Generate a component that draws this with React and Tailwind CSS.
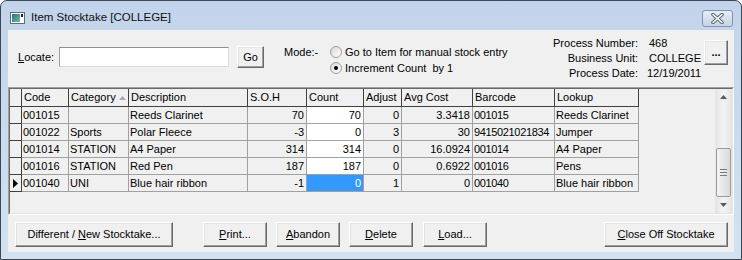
import React from "react";

const COLS = [
  { label: "Code", w: "w-[47px]" },
  { label: "Category", w: "w-[60px]", sort: true },
  { label: "Description", w: "w-[119px]" },
  { label: "S.O.H", w: "w-[59px]", right: true },
  { label: "Count", w: "w-[57px]", right: true, edit: true },
  { label: "Adjust", w: "w-[38px]", right: true },
  { label: "Avg Cost", w: "w-[71px]", right: true },
  { label: "Barcode", w: "w-[82px]", tight: true },
  { label: "Lookup", w: "w-[84px]" }
];

const ROWS = [
  ["001015", "", "Reeds Clarinet", "70", "70", "0", "3.3418", "001015", "Reeds Clarinet"],
  ["001022", "Sports", "Polar Fleece", "-3", "0", "3", "30", "9415021021834", "Jumper"],
  ["001014", "STATION", "A4 Paper", "314", "314", "0", "16.0924", "001014", "A4 Paper"],
  ["001016", "STATION", "Red Pen", "187", "187", "0", "0.6922", "001016", "Pens"],
  ["001040", "UNI", "Blue hair ribbon", "-1", "0", "1", "0", "001040", "Blue hair ribbon"]
];

function Btn({ children, className = "" }) {
  return (
    <button
      className={`flex items-center justify-center whitespace-pre bg-[#f0f0f0] border border-t-white border-l-white border-r-[#696969] border-b-[#696969] shadow-[inset_-1px_-1px_0_#a0a0a0,inset_1px_1px_0_#e3e3e3] text-[11px] leading-none text-black ${className}`}
    >
      {children}
    </button>
  );
}

function Radio({ checked }) {
  return (
    <span className="w-[12px] h-[12px] rounded-full border border-[#9c9c9c] bg-gradient-to-br from-[#d8d8d8] to-white flex items-center justify-center">
      {checked && <span className="w-[4px] h-[4px] rounded-full bg-black" />}
    </span>
  );
}

function TitleIcon() {
  return (
    <svg width="15" height="12" viewBox="0 0 15 12">
      <defs>
        <linearGradient id="ti" x1="0" y1="0" x2="1" y2="1">
          <stop offset="0" stopColor="#2c6e8e" />
          <stop offset="1" stopColor="#6cc29a" />
        </linearGradient>
      </defs>
      <rect x="0.5" y="0.5" width="14" height="11" fill="#ffffff" stroke="#5d6b7c" />
      <rect x="2" y="2" width="8" height="8" fill="url(#ti)" />
      <rect x="11" y="2" width="2" height="3" fill="#1a1a1a" />
    </svg>
  );
}

function CloseX() {
  return (
    <svg width="13" height="11" viewBox="0 0 13 11">
      <path d="M2 1.5 L11 9.5 M11 1.5 L2 9.5" stroke="#5b6673" strokeWidth="3.6" strokeLinecap="round" />
      <path d="M2 1.5 L11 9.5 M11 1.5 L2 9.5" stroke="#ffffff" strokeWidth="1.6" strokeLinecap="round" />
    </svg>
  );
}

function Scrollbar() {
  return (
    <div className="w-[17px] flex flex-col bg-gradient-to-r from-[#e4e4e4] via-[#f3f3f3] to-[#e4e4e4]">
      <div className="h-[17px] flex items-center justify-center">
        <svg width="7" height="4" viewBox="0 0 7 4">
          <path d="M0 4 L3.5 0 L7 4 Z" fill="#5c5c5c" />
        </svg>
      </div>
      <div className="flex-1 flex flex-col items-center">
        <div className="mt-[42px] w-[15px] h-[49px] rounded-[2px] border border-[#9b9b9b] bg-gradient-to-r from-[#f4f4f4] to-[#dadada] flex flex-col items-center justify-center gap-[2px]">
          <span className="w-[7px] h-px bg-[#7b7b7b]" />
          <span className="w-[7px] h-px bg-[#7b7b7b]" />
          <span className="w-[7px] h-px bg-[#7b7b7b]" />
        </div>
      </div>
      <div className="h-[17px] flex items-center justify-center">
        <svg width="7" height="4" viewBox="0 0 7 4">
          <path d="M0 0 L7 0 L3.5 4 Z" fill="#5c5c5c" />
        </svg>
      </div>
    </div>
  );
}

function Grid() {
  return (
    <div className="h-[128px] border border-t-[#a0a0a0] border-l-[#a0a0a0] border-r-white border-b-white">
      <div className="h-full flex border border-t-[#696969] border-l-[#696969] border-r-[#e3e3e3] border-b-[#e3e3e3] bg-[#f0f0f0]">
        <div className="flex-1 flex flex-col">
          {/* header */}
          <div className="flex h-[18px]">
            <div className="w-[12px] border-r border-b border-[#404040]" />
            {COLS.map((c) => (
              <div
                key={c.label}
                className={`${c.w} flex items-center pl-[2px] border-r border-b border-[#404040] whitespace-nowrap`}
              >
                {c.label}
                {c.sort && (
                  <svg className="ml-[3px]" width="7" height="4" viewBox="0 0 7 4">
                    <path d="M0 4 L3.5 0 L7 4 Z" fill="#a8a8a8" />
                  </svg>
                )}
              </div>
            ))}
          </div>
          {/* rows */}
          {ROWS.map((r, ri) => {
            const current = ri === ROWS.length - 1;
            return (
              <div key={ri} className="flex h-[17px]">
                <div className="w-[12px] flex items-center justify-center border-r border-b border-[#404040]">
                  {current && (
                    <svg width="5" height="9" viewBox="0 0 5 9">
                      <path d="M0 0 L5 4.5 L0 9 Z" fill="#000" />
                    </svg>
                  )}
                </div>
                {COLS.map((c, ci) => {
                  const selected = current && c.edit;
                  return (
                    <div
                      key={ci}
                      className={`${c.w} flex items-center overflow-hidden whitespace-nowrap border-r border-b border-[#a0a0a0] ${
                        c.right ? "justify-end pr-[2px]" : "pl-[1px]"
                      } ${c.tight ? "tracking-[-0.35px]" : ""} ${
                        selected ? "bg-[#3399ff] text-white" : c.edit ? "bg-white" : ""
                      }`}
                    >
                      {r[ci]}
                    </div>
                  );
                })}
              </div>
            );
          })}
        </div>
        <Scrollbar />
      </div>
    </div>
  );
}

export default function App() {
  return (
    <div className="w-[742px] h-[260px] bg-white font-['Liberation_Sans',Arial,sans-serif] text-[11px] text-black">
      <div className="w-[742px] h-[260px] flex flex-col rounded-t-[7px] border border-[#3e4650] bg-gradient-to-b from-[#c2d4eb] to-[#d3e2f3]">
        {/* Title bar */}
        <div className="h-[29px] flex items-center pl-[9px] pr-[8px]">
          <div className="mt-[4px]">
            <TitleIcon />
          </div>
          <span className="ml-[6px] mt-[5px] text-[11.5px] text-[#111]">Item Stocktake [COLLEGE]</span>
          <div className="ml-auto mt-[5px] w-[31px] h-[17px] rounded-[3px] border border-[#8393aa] bg-gradient-to-b from-[#e6edf6] to-[#c5d3e4] flex items-center justify-center">
            <CloseX />
          </div>
        </div>

        {/* Client area */}
        <div className="mx-[7px] h-[222px] bg-[#f0f0f0] flex flex-col">
          {/* Top controls */}
          <div className="h-[57px] flex items-start pl-[10px]">
            <div className="mt-[16px] h-[22px] flex items-center">
              <span className="w-[41px]">
                <u>L</u>ocate:
              </span>
              <div className="w-[170px] h-[20px] bg-white border border-t-[#8e8f8f] border-l-[#a0a0a0] border-r-[#dcdcdc] border-b-[#dcdcdc]" />
              <Btn className="ml-[8px] w-[27px] h-[22px]">Go</Btn>
            </div>

            <div className="ml-[20px] mt-[14px] flex">
              <span className="w-[46px] h-[16px] leading-[16px]">Mode:-</span>
              <div className="flex flex-col">
                <div className="h-[16px] flex items-center gap-[3px]">
                  <Radio />
                  <span>Go to Item for manual stock entry</span>
                </div>
                <div className="h-[16px] flex items-center gap-[3px]">
                  <Radio checked />
                  <span className="whitespace-pre">Increment Count  by 1</span>
                </div>
              </div>
            </div>

            <div className="ml-auto mt-[6px] grid grid-cols-[auto_47px] gap-x-[11px] leading-[15px]">
              <span className="text-right">Process Number:</span>
              <span className="whitespace-nowrap">468</span>
              <span className="text-right">Business Unit:</span>
              <span className="whitespace-nowrap">COLLEGE</span>
              <span className="text-right">Process Date:</span>
              <span className="whitespace-nowrap -ml-[2px]">12/19/2011</span>
            </div>
            <Btn className="ml-[8px] mr-[6px] mt-[10px] w-[24px] h-[25px] font-bold">...</Btn>
          </div>

          {/* Grid */}
          <Grid />

          {/* Bottom buttons */}
          <div className="h-[37px] flex items-start pt-[7px] pl-[7px] pr-[6px]">
            <Btn className="w-[158px] h-[25px]">
              {"Different / "}
              <u>N</u>
              {"ew Stocktake..."}
            </Btn>
            <Btn className="ml-[30px] w-[64px] h-[25px]">
              <u>P</u>rint...
            </Btn>
            <Btn className="ml-[9px] w-[64px] h-[25px]">
              <u>A</u>bandon
            </Btn>
            <Btn className="ml-[9px] w-[64px] h-[25px]">
              <u>D</u>elete
            </Btn>
            <Btn className="ml-[10px] w-[64px] h-[25px]">
              <u>L</u>oad...
            </Btn>
            <Btn className="ml-auto w-[124px] h-[25px]">
              <u>C</u>lose Off Stocktake
            </Btn>
          </div>
        </div>
      </div>
    </div>
  );
}
